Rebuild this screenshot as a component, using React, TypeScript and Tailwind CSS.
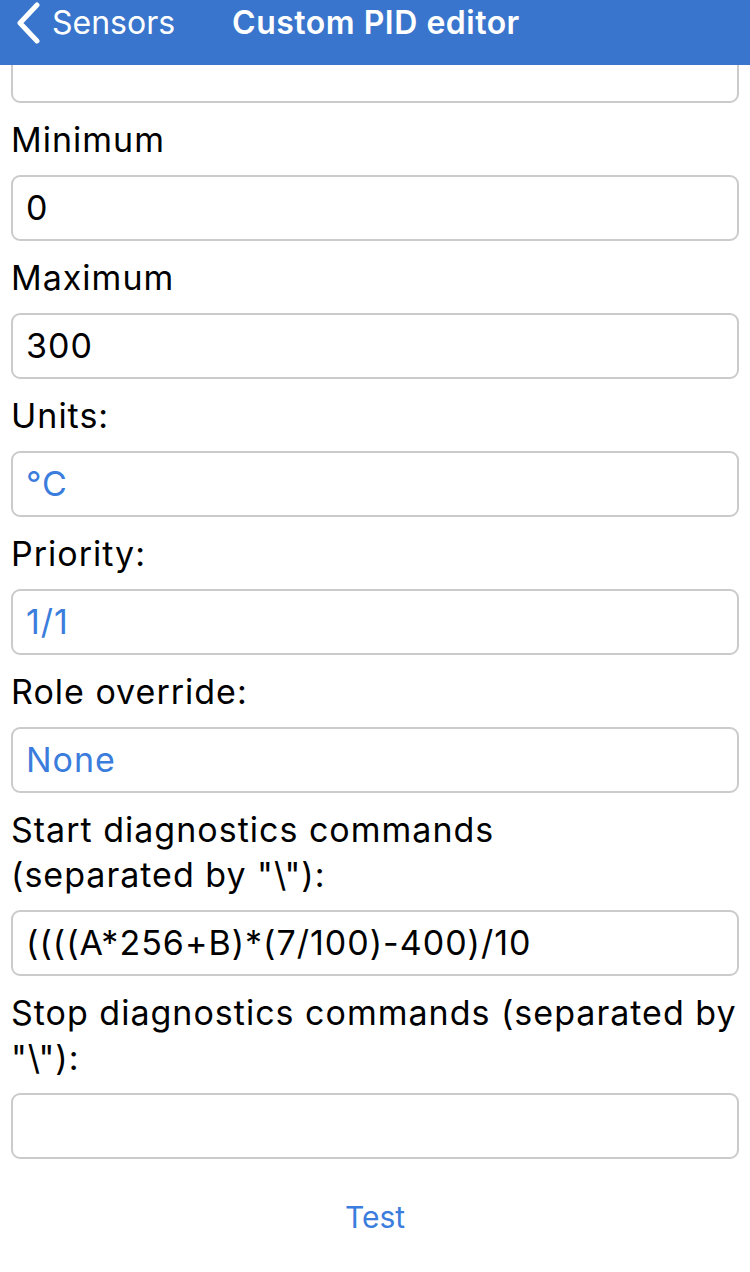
import React from "react"

const font = { fontFamily: "Inter, 'Noto Sans', sans-serif" }

function Field({ value, blue }: { value?: string; blue?: boolean }) {
  return (
    <div className="mx-[11px] flex h-[66px] items-center rounded-[9px] border-2 border-[#cbcbcb] bg-white px-[13px]">
      <span className={`text-[34px] leading-none tracking-[1px] ${blue ? "text-[#3b7ddc]" : "text-black"}`}>{value}</span>
    </div>
  )
}

function Label({ children }: { children: React.ReactNode }) {
  return <div className="whitespace-nowrap px-[11px] py-[13.5px] text-[34px] leading-[45px] tracking-[1px] text-black">{children}</div>
}

export default function App() {
  return (
    <div className="flex h-[1272px] w-[750px] flex-col overflow-hidden bg-white" style={font}>
      <div className="relative z-10 flex h-[65px] shrink-0 items-start bg-[#3975cc] text-white">
        <div className="flex items-center pl-[14px] pt-[2px]">
          <svg width="28" height="42" viewBox="0 0 28 42" fill="none">
            <path d="M23 3 L6 21 L23 39" stroke="white" strokeWidth="5" strokeLinecap="round" strokeLinejoin="round" />
          </svg>
          <span className="ml-[10px] text-[32px] leading-[42px]">Sensors</span>
        </div>
        <span className="ml-[57px] pt-[2px] text-[32px] font-semibold leading-[42px] tracking-[0.5px]">Custom PID editor</span>
      </div>
      <div className="flex flex-col">
        <div className="-mt-[28px]">
          <Field />
        </div>
        <Label>Minimum</Label>
        <Field value="0" />
        <Label>Maximum</Label>
        <Field value="300" />
        <Label>Units:</Label>
        <Field value="°C" blue />
        <Label>Priority:</Label>
        <Field value="1/1" blue />
        <Label>Role override:</Label>
        <Field value="None" blue />
        <Label>
          Start diagnostics commands
          <br />
          (separated by "\"):
        </Label>
        <Field value="((((A*256+B)*(7/100)-400)/10" />
        <Label>
          Stop diagnostics commands (separated by
          <br />
          "\"):
        </Label>
        <Field />
        <div className="mt-[43px] text-center text-[30px] leading-none text-[#3b7ddc]">Test</div>
      </div>
    </div>
  )
}
